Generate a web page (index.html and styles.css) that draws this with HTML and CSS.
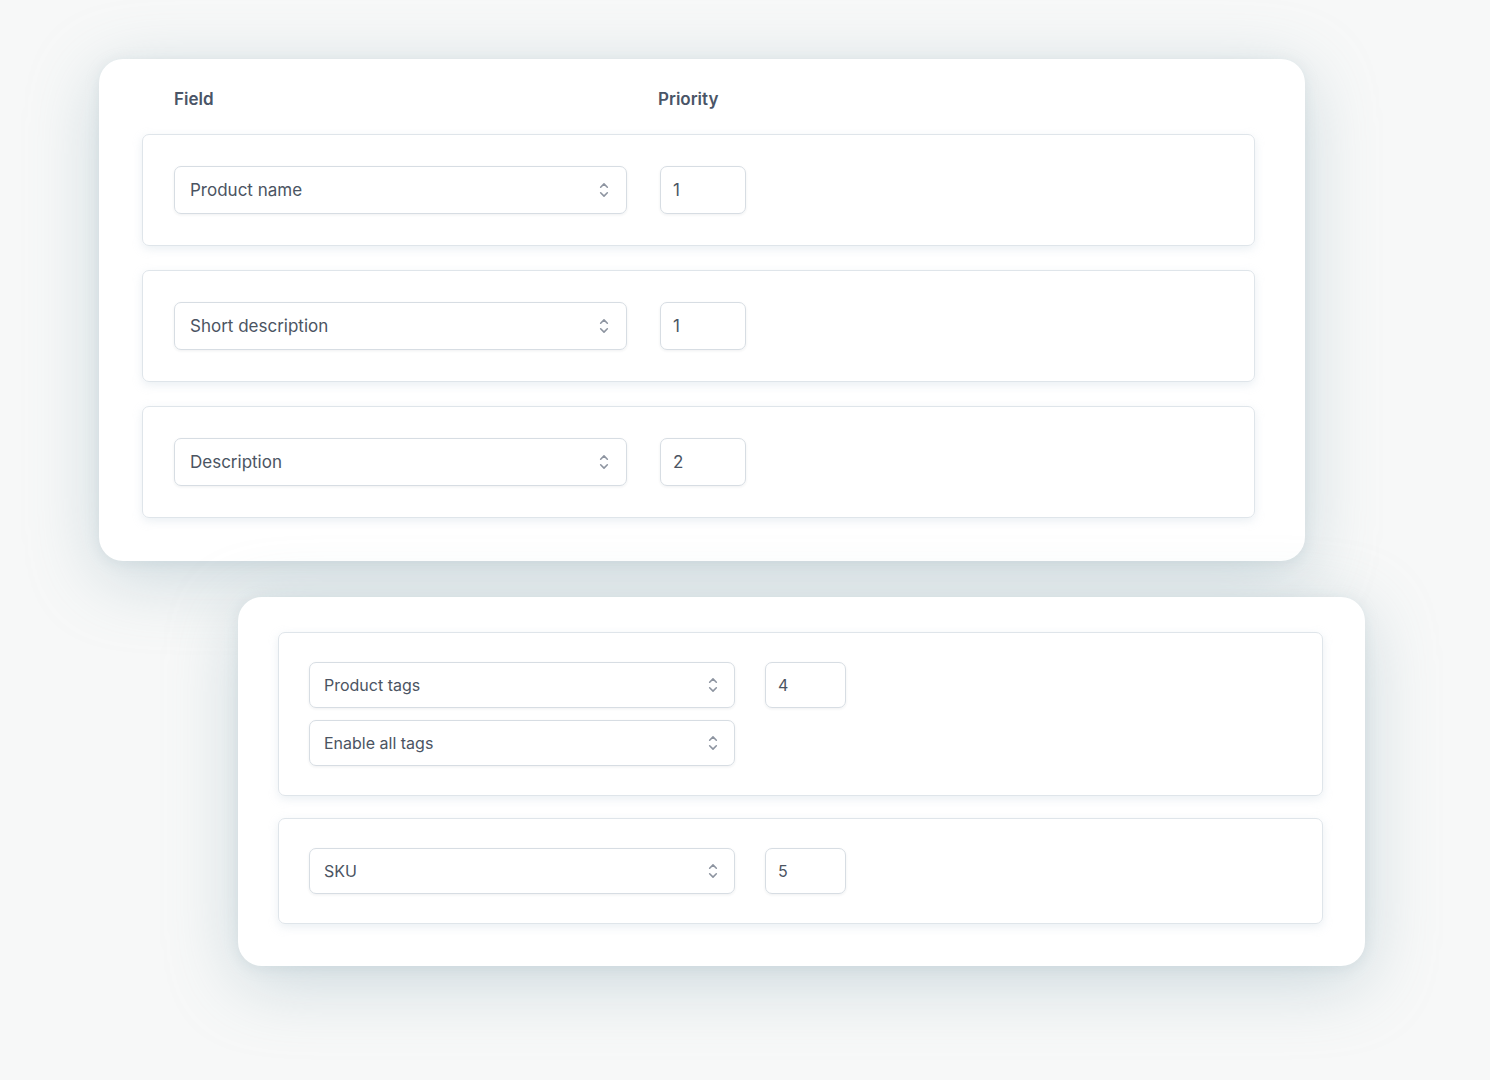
FILE: index.html
```html
<!DOCTYPE html>
<html lang="en">
<head>
  <meta charset="UTF-8">
  <title>Field priorities</title>
  <link rel="stylesheet" href="styles.css">
</head>
<body>

  <!-- main card: field / priority list -->
  <div class="card card-main">
    <div class="head">
      <div class="col-field">Field</div>
      <div class="col-prio">Priority</div>
    </div>

    <div class="rows">
      <div class="row">
        <div class="fields">
          <div class="select">
            <span>Product name</span>
            <svg class="chev" viewBox="0 0 10 18"><path d="M2 6.5 5 3.5 8 6.5M2 11.5 5 14.5 8 11.5"/></svg>
          </div>
        </div>
        <div class="num">1</div>
      </div>

      <div class="row">
        <div class="fields">
          <div class="select">
            <span>Short description</span>
            <svg class="chev" viewBox="0 0 10 18"><path d="M2 6.5 5 3.5 8 6.5M2 11.5 5 14.5 8 11.5"/></svg>
          </div>
        </div>
        <div class="num">1</div>
      </div>

      <div class="row">
        <div class="fields">
          <div class="select">
            <span>Description</span>
            <svg class="chev" viewBox="0 0 10 18"><path d="M2 6.5 5 3.5 8 6.5M2 11.5 5 14.5 8 11.5"/></svg>
          </div>
        </div>
        <div class="num">2</div>
      </div>
    </div>
  </div>

  <!-- second card: tags + sku -->
  <div class="card card-sub">
    <div class="rows">
      <div class="row">
        <div class="fields">
          <div class="select">
            <span>Product tags</span>
            <svg class="chev" viewBox="0 0 10 18"><path d="M2 6.5 5 3.5 8 6.5M2 11.5 5 14.5 8 11.5"/></svg>
          </div>
          <div class="select">
            <span>Enable all tags</span>
            <svg class="chev" viewBox="0 0 10 18"><path d="M2 6.5 5 3.5 8 6.5M2 11.5 5 14.5 8 11.5"/></svg>
          </div>
        </div>
        <div class="num">4</div>
      </div>

      <div class="row">
        <div class="fields">
          <div class="select">
            <span>SKU</span>
            <svg class="chev" viewBox="0 0 10 18"><path d="M2 6.5 5 3.5 8 6.5M2 11.5 5 14.5 8 11.5"/></svg>
          </div>
        </div>
        <div class="num">5</div>
      </div>
    </div>
  </div>

</body>
</html>
```

FILE: styles.css
```css
:root {
  --bg: #f7f8f8;
  --text: #4b5462;
  --head: #4a5567;
  --line: #d7dde3;
  --row-line: #dfe5ea;
  --chev: #8d94a0;
}

html {
  background: var(--bg);
}

body {
  margin: 0;
  padding: 1px 0 120px;
  font-family: Inter, 'Noto Sans', sans-serif;
  color: var(--text);
}

.card {
  background: #fff;
  border-radius: 24px;
  box-shadow: 0 16px 70px rgba(150, 178, 188, 0.45), 0 2px 14px rgba(170, 190, 198, 0.25);
  box-sizing: border-box;
}

.card-main {
  margin: 58px 0 0 99px;
  width: 1206px;
  padding: 29px 50px 43px 43px;
}

.card-sub {
  margin: 36px 0 0 238px;
  width: 1127px;
  padding: 35px 42px 42px 40px;
}

.head {
  display: flex;
  gap: 31px;
  padding-left: 32px;
  height: 22px;
  line-height: 22px;
  margin-bottom: 24px;
  font-size: 17px;
  font-weight: 600;
  color: var(--head);
}

.col-field { width: 453px; }

.rows {
  display: flex;
  flex-direction: column;
  gap: 24px;
}

.card-sub .rows { gap: 22px; }

.row {
  display: flex;
  align-items: flex-start;
  gap: 33px;
  border: 1px solid var(--row-line);
  border-radius: 7px;
  padding: 31px;
  box-shadow: 0 3px 10px rgba(195, 210, 220, 0.35);
}

.card-sub .row {
  padding: 29px 30px;
  gap: 30px;
}

.fields {
  display: flex;
  flex-direction: column;
  gap: 12px;
}

.select {
  width: 453px;
  height: 48px;
  box-sizing: border-box;
  border: 1px solid var(--line);
  border-radius: 7px;
  display: flex;
  align-items: center;
  justify-content: space-between;
  padding: 0 16px 0 15px;
  font-size: 17px;
  box-shadow: 0 1px 3px rgba(30, 40, 60, 0.07);
}

.card-sub .select {
  width: 426px;
  height: 46px;
  padding: 0 15px 0 14px;
  font-size: 16px;
}

.chev {
  width: 12px;
  height: 20px;
  fill: none;
  stroke: var(--chev);
  stroke-width: 1.4;
  stroke-linecap: round;
  stroke-linejoin: round;
}

.num {
  width: 86px;
  height: 48px;
  box-sizing: border-box;
  border: 1px solid var(--line);
  border-radius: 7px;
  padding-left: 12px;
  line-height: 47px;
  font-size: 17px;
  box-shadow: 0 1px 3px rgba(30, 40, 60, 0.07);
}

.card-sub .num {
  width: 81px;
  height: 46px;
  line-height: 45px;
  font-size: 16px;
}
```
